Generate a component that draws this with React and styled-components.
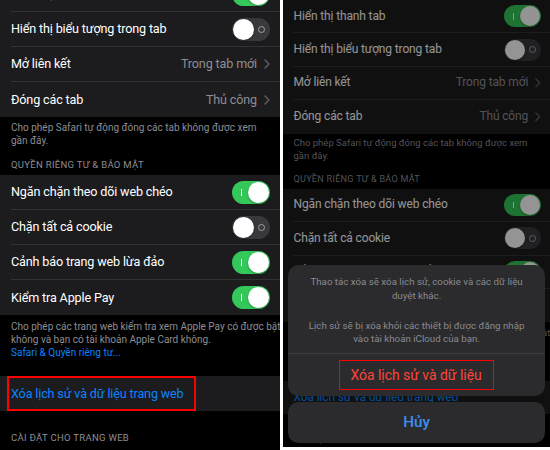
import React from 'react';
import styled, { createGlobalStyle } from 'styled-components';

const GlobalStyle = createGlobalStyle`
  html, body {
    margin: 0;
    padding: 0;
    background: #fff;
  }
  body {
    font-family: Roboto, "Noto Sans", sans-serif;
    -webkit-font-smoothing: antialiased;
  }
`;

const Page = styled.div`
  display: flex;
  align-items: flex-start;
  gap: 3px;
  width: 550px;
  height: 450px;
  overflow: hidden;
`;

const Screen = styled.div`
  position: relative;
  flex-shrink: 0;
  width: 280px;
  height: ${p => p.$height}px;
  background: #000;
  overflow: hidden;
  zoom: ${p => p.$zoom || 1};
`;

const Content = styled.div`
  margin-top: ${p => -p.$scroll || 0}px;
`;

const Group = styled.div`
  background: #1c1c1e;
  margin-top: ${p => p.$gap || 0}px;
`;

const Row = styled.div`
  display: flex;
  align-items: center;
  height: 35px;
  padding-left: ${p => (p.$marked ? 7 : 11)}px;
`;

const RowBody = styled.div`
  flex: 1;
  display: flex;
  align-items: center;
  height: 100%;
  padding-right: 10px;
  box-sizing: border-box;
  border-bottom: 1px solid #333336;

  ${Row}:last-child & {
    border-bottom: none;
  }
`;

const Label = styled.span`
  flex: 1;
  font-size: 12.6px;
  line-height: 16px;
  letter-spacing: -0.15px;
  color: ${p => (p.$link ? '#0a84ff' : '#fff')};
  white-space: nowrap;
`;

const Value = styled.span`
  font-size: 12.6px;
  line-height: 16px;
  letter-spacing: -0.15px;
  color: #8e8e93;
  margin-right: 7px;
  white-space: nowrap;
`;

const Marked = styled.span`
  display: inline-flex;
  align-items: center;
  height: ${p => p.$h || 35}px;
  box-sizing: border-box;
  padding: 0 ${p => p.$pr || 10}px 0 ${p => p.$pl || 2}px;
  border: 2px solid #ff0000;
`;

const Track = styled.div`
  position: relative;
  width: 38px;
  height: 23px;
  border-radius: 12px;
  background: ${p => (p.$on ? '#34c759' : '#39393d')};
  flex-shrink: 0;
`;

const Knob = styled.div`
  position: absolute;
  top: 1px;
  left: ${p => (p.$on ? 16 : 1)}px;
  width: 21px;
  height: 21px;
  border-radius: 50%;
  background: #fff;
  box-shadow: 0 1px 2px rgba(0, 0, 0, 0.3);
`;

const OnMark = styled.div`
  position: absolute;
  left: 9px;
  top: 8px;
  width: 1px;
  height: 7px;
  background: #fff;
`;

const OffMark = styled.div`
  position: absolute;
  right: 5px;
  top: 8px;
  width: 5px;
  height: 5px;
  border-radius: 50%;
  border: 1px solid #a0a0a6;
`;

const Footer = styled.div`
  padding: ${p => p.$top || 4}px 11px 0;
  font-size: 10px;
  line-height: 13px;
  color: #8d8d93;
  white-space: nowrap;
`;

const FooterLink = styled.div`
  color: #0a84ff;
`;

const SectionHeader = styled.div`
  padding: ${p => p.$top || 11}px 11px 4px;
  font-size: 9.5px;
  line-height: 13px;
  letter-spacing: 0.3px;
  color: #8d8d93;
  text-transform: uppercase;
  white-space: nowrap;
`;

const Overlay = styled.div`
  position: absolute;
  inset: 0;
  background: rgba(0, 0, 0, 0.42);
`;

const Sheet = styled.div`
  position: absolute;
  left: 5px;
  right: 5px;
  bottom: 5px;
  display: flex;
  flex-direction: column;
  gap: 6px;
`;

const SheetCard = styled.div`
  background: #2b2b2d;
  border-radius: 11px;
  overflow: hidden;
`;

const SheetMessage = styled.div`
  padding: 10px 8px 7px;
  text-align: center;
  font-size: 10.2px;
  line-height: 14.5px;
  color: #8a8a8f;
  border-bottom: 1px solid #3c3c3f;
  white-space: nowrap;

  p {
    margin: 0;
  }
  p + p {
    margin-top: 17px;
  }
`;

const SheetButton = styled.div`
  display: flex;
  align-items: center;
  justify-content: center;
  height: ${p => p.$h || 44}px;
  font-size: ${p => (p.$cancel ? 16 : 14.6)}px;
  font-weight: ${p => (p.$cancel ? 500 : 400)};
  color: ${p => (p.$cancel ? '#3b8ff0' : '#ff453a')};
`;

const Chevron = () => (
  <svg width="6" height="10" viewBox="0 0 6 10">
    <path d="M1 1l4 4-4 4" fill="none" stroke="#5c5c61" strokeWidth="1.5" strokeLinecap="round" strokeLinejoin="round" />
  </svg>
);

const Toggle = ({ on }) => (
  <Track $on={on}>
    {on ? <OnMark /> : <OffMark />}
    <Knob $on={on} />
  </Track>
);

const tabRows = [
  { label: 'Hiển thị thanh tab', toggle: true },
  { label: 'Hiển thị biểu tượng trong tab', toggle: false },
  { label: 'Mở liên kết', value: 'Trong tab mới' },
  { label: 'Đóng các tab', value: 'Thủ công' },
];

const privacyRows = [
  { label: 'Ngăn chặn theo dõi web chéo', toggle: true },
  { label: 'Chặn tất cả cookie', toggle: false },
  { label: 'Cảnh báo trang web lừa đảo', toggle: true },
  { label: 'Kiểm tra Apple Pay', toggle: true },
];

const SettingRow = ({ row }) => (
  <Row>
    <RowBody>
      <Label>{row.label}</Label>
      {row.value !== undefined ? (
        <>
          <Value>{row.value}</Value>
          <Chevron />
        </>
      ) : (
        <Toggle on={row.toggle} />
      )}
    </RowBody>
  </Row>
);

const Settings = ({ scroll, marked }) => (
  <Content $scroll={scroll}>
    <Group>
      {tabRows.map(r => <SettingRow key={r.label} row={r} />)}
    </Group>
    <Footer>
      Cho phép Safari tự động đóng các tab không được xem<br />gần đây.
    </Footer>
    <SectionHeader>Quyền riêng tư &amp; bảo mật</SectionHeader>
    <Group>
      {privacyRows.map(r => <SettingRow key={r.label} row={r} />)}
    </Group>
    <Footer $top={5}>
      Cho phép các trang web kiểm tra xem Apple Pay có được bật<br />
      không và bạn có tài khoản Apple Card không.
      <FooterLink>Safari &amp; Quyền riêng tư...</FooterLink>
    </Footer>
    <Group $gap={17}>
      <Row $marked={marked}>
        <RowBody>
          {marked ? (
            <Marked>
              <Label $link>Xóa lịch sử và dữ liệu trang web</Label>
            </Marked>
          ) : (
            <Label $link>Xóa lịch sử và dữ liệu trang web</Label>
          )}
        </RowBody>
      </Row>
    </Group>
    <SectionHeader $top={20}>Cài đặt cho trang web</SectionHeader>
  </Content>
);

const App = () => (
  <>
    <GlobalStyle />
    <Page>
      <Screen $height={450}>
        <Settings scroll={23} marked />
      </Screen>
      <Screen $height={469} $zoom={0.954}>
        <Settings scroll={0} />
        <Overlay />
        <Sheet>
          <SheetCard>
            <SheetMessage>
              <p>Thao tác xóa sẽ xóa lịch sử, cookie và các dữ liệu<br />duyệt khác.</p>
              <p>Lịch sử sẽ bị xóa khỏi các thiết bị được đăng nhập<br />vào tài khoản iCloud của bạn.</p>
            </SheetMessage>
            <SheetButton>
              <Marked $h={32} $pl={11} $pr={12}>Xóa lịch sử và dữ liệu</Marked>
            </SheetButton>
          </SheetCard>
          <SheetCard>
            <SheetButton $cancel $h={43}>Hủy</SheetButton>
          </SheetCard>
        </Sheet>
      </Screen>
    </Page>
  </>
);

export default App;
